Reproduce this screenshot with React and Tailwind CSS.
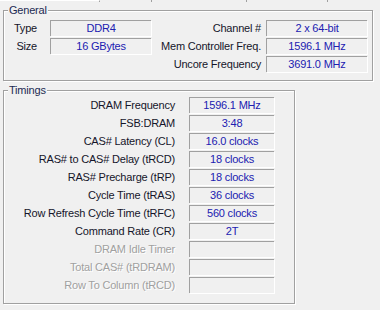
import React from "react";

const font = { fontFamily: '"Liberation Sans", Arial, sans-serif' };

const general = [
  { left: "Type", leftValue: "DDR4", right: "Channel #", rightValue: "2 x 64-bit" },
  { left: "Size", leftValue: "16 GBytes", right: "Mem Controller Freq.", rightValue: "1596.1 MHz" },
  { left: null, leftValue: null, right: "Uncore Frequency", rightValue: "3691.0 MHz" },
];

const timings = [
  { label: "DRAM Frequency", value: "1596.1 MHz" },
  { label: "FSB:DRAM", value: "3:48" },
  { label: "CAS# Latency (CL)", value: "16.0 clocks" },
  { label: "RAS# to CAS# Delay (tRCD)", value: "18 clocks" },
  { label: "RAS# Precharge (tRP)", value: "18 clocks" },
  { label: "Cycle Time (tRAS)", value: "36 clocks" },
  { label: "Row Refresh Cycle Time (tRFC)", value: "560 clocks" },
  { label: "Command Rate (CR)", value: "2T" },
  { label: "DRAM Idle Timer", value: "", disabled: true },
  { label: "Total CAS# (tRDRAM)", value: "", disabled: true },
  { label: "Row To Column (tRCD)", value: "", disabled: true },
];

// sunken read-only edit box
const Field = ({ children, className = "" }) => (
  <div
    className={`h-4 flex items-center justify-center border-t border-l border-[#a0a0a0] shadow-[1px_1px_0_#ffffff] text-[#2020b0] leading-none ${className}`}
  >
    {children}
  </div>
);

const GroupBox = ({ title, className = "", children }) => (
  <div
    className={`relative border border-[#a0a0a0] shadow-[inset_1px_1px_0_#ffffff,1px_1px_0_#ffffff] ${className}`}
  >
    <span className="absolute left-[4px] top-[-7px] px-[1px] bg-[#f0f0f0] text-[#1c2a52] leading-[12px]">
      {title}
    </span>
    {children}
  </div>
);

const App = () => {
  return (
    <div
      className="w-[380px] h-[310px] bg-[#f0f0f0] text-[11px] tracking-[-0.2px] text-[#15152a] overflow-hidden"
      style={font}
    >
      {/* bottom edge of the tab strip above */}
      <div className="flex h-[2px]">
        <div className="w-[100px] border-t border-white border-r border-r-[#a0a0a0]"></div>
        <div className="w-[52px] border-r border-[#a0a0a0]"></div>
        <div className="w-[95px] border-r border-[#a0a0a0]"></div>
        <div className="w-[81px] border-r border-[#a0a0a0]"></div>
      </div>

      <GroupBox title="General" className="ml-[3px] mt-[8px] w-[370px] h-[71px]">
        <div className="flex flex-col gap-[2px] pt-[9px]">
          {general.map((row, i) => (
            <div key={i} className="flex items-center h-4">
              <div className="w-[33px] text-right">{row.left}</div>
              <div className="w-[13px]"></div>
              {row.leftValue ? (
                <Field className="w-[101px]">{row.leftValue}</Field>
              ) : (
                <div className="w-[101px]"></div>
              )}
              <div className="flex-1 text-right pr-[5px]">{row.right}</div>
              <Field className="w-[101px] mr-[5px]">{row.rightValue}</Field>
            </div>
          ))}
        </div>
      </GroupBox>

      <GroupBox title="Timings" className="ml-[3px] mt-[9px] w-[292px] h-[214px]">
        <div className="flex flex-col gap-[2px] pt-[6px]">
          {timings.map((row, i) => (
            <div key={i} className="flex items-center h-4">
              <div
                className={`w-[171px] text-right ${
                  row.disabled ? "text-[#a0a0a0] [text-shadow:1px_1px_0_#ffffff]" : ""
                }`}
              >
                {row.label}
              </div>
              <div className="w-[14px]"></div>
              <Field className="w-[85px]">{row.value}</Field>
            </div>
          ))}
        </div>
      </GroupBox>
    </div>
  );
};

export default App;
